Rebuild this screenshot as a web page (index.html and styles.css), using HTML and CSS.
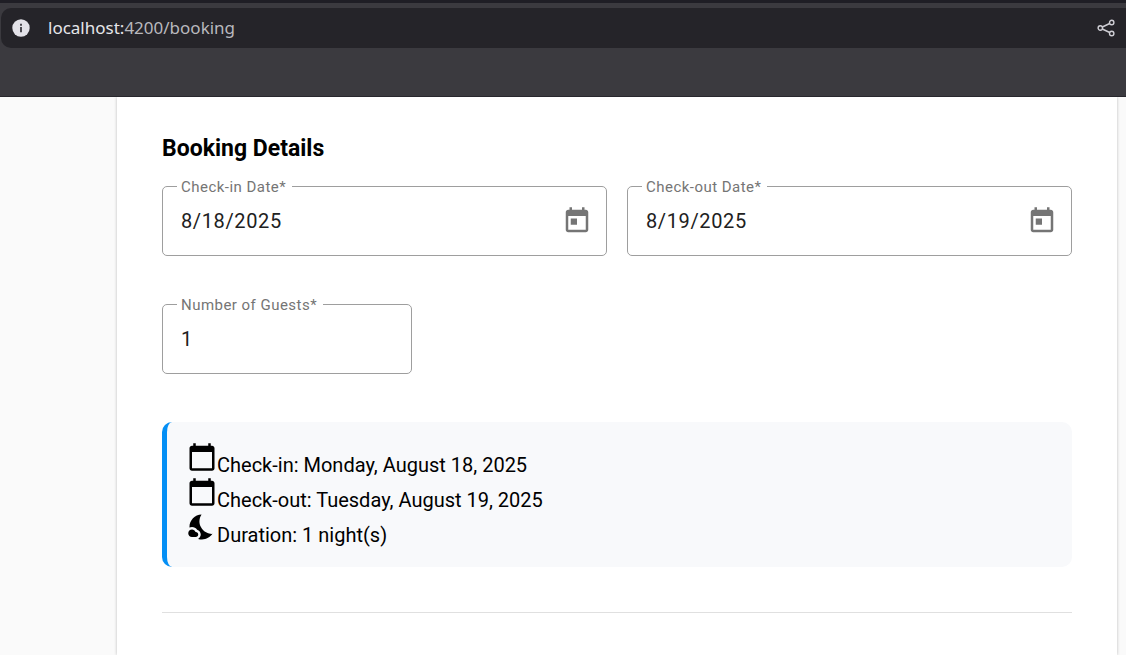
FILE: index.html
```html
<!DOCTYPE html>
<html lang="en">
<head>
<meta charset="utf-8">
<meta name="viewport" content="width=device-width, initial-scale=1">
<title>Booking</title>
<link rel="stylesheet" href="styles.css">
</head>
<body>
<header class="browser">
  <div class="address-bar">
    <button class="bar-button" type="button" aria-label="Site information">
      <svg width="18" height="18" viewBox="0 0 18 18"><circle cx="9" cy="9" r="8.7" fill="#e3e2e8"/><path d="M8 4.8h2v2H8zM8 8h2v5.2H8z" fill="#4a494f"/></svg>
    </button>
    <div class="address" role="textbox" aria-label="Address" contenteditable="true" spellcheck="false">localhost:<span class="address-path">4200/booking</span></div>
    <button class="bar-button" type="button" aria-label="Share">
      <svg width="18" height="18" viewBox="0 0 18 18" fill="none" stroke="#cfced4" stroke-width="1.4"><circle cx="3.3" cy="9" r="2.2"/><circle cx="14.7" cy="3.5" r="2.2"/><circle cx="14.7" cy="14.5" r="2.2"/><path d="M5.3 8l7.4-3.5M5.3 10l7.4 3.5"/></svg>
    </button>
  </div>
</header>
<main class="page">
  <form class="card">
    <h2 class="title">Booking Details</h2>
    <div class="dates">
      <div class="field">
        <label class="field-label" for="checkin">Check-in Date*</label>
        <input class="field-input" id="checkin" type="text" value="8/18/2025">
        <button class="picker" type="button" aria-label="Open check-in calendar">
          <svg width="30" height="30" viewBox="0 0 24 24"><path fill="currentColor" d="M19 3h-1V1h-2v2H8V1H6v2H5c-1.11 0-1.99.9-1.99 2L3 19c0 1.1.89 2 2 2h14c1.1 0 2-.9 2-2V5c0-1.1-.9-2-2-2zm0 16H5V8h14v11zM7 10h5v5H7z"/></svg>
        </button>
      </div>
      <div class="field">
        <label class="field-label" for="checkout">Check-out Date*</label>
        <input class="field-input" id="checkout" type="text" value="8/19/2025">
        <button class="picker" type="button" aria-label="Open check-out calendar">
          <svg width="30" height="30" viewBox="0 0 24 24"><path fill="currentColor" d="M19 3h-1V1h-2v2H8V1H6v2H5c-1.11 0-1.99.9-1.99 2L3 19c0 1.1.89 2 2 2h14c1.1 0 2-.9 2-2V5c0-1.1-.9-2-2-2zm0 16H5V8h14v11zM7 10h5v5H7z"/></svg>
        </button>
      </div>
    </div>
    <div class="field field-guests">
      <label class="field-label" for="guests">Number of Guests*</label>
      <input class="field-input" id="guests" type="number" min="1" value="1">
    </div>
    <section class="summary">
      <p class="summary-row"><svg width="30" height="30" viewBox="0 0 24 24"><path d="M20 3h-1V1h-2v2H7V1H5v2H4c-1.1 0-2 .9-2 2v16c0 1.1.9 2 2 2h16c1.1 0 2-.9 2-2V5c0-1.1-.9-2-2-2zm0 18H4V8h16v13z"/></svg>Check-in: Monday, August 18, 2025</p>
      <p class="summary-row"><svg width="30" height="30" viewBox="0 0 24 24"><path d="M20 3h-1V1h-2v2H7V1H5v2H4c-1.1 0-2 .9-2 2v16c0 1.1.9 2 2 2h16c1.1 0 2-.9 2-2V5c0-1.1-.9-2-2-2zm0 18H4V8h16v13z"/></svg>Check-out: Tuesday, August 19, 2025</p>
      <p class="summary-row"><svg width="30" height="30" viewBox="0 0 24 24"><path d="M11.1 12.08c-2.33-4.51-.5-8.48.53-10.07C6.27 2.2 1.98 6.59 1.98 12c0 .14.02.28.02.42.62-.27 1.29-.42 2-.42 1.66 0 3.18.83 4.1 2.15 1.67.48 2.9 2.02 2.9 3.85 0 1.52-.87 2.83-2.12 3.51.98.32 2.03.5 3.11.5 3.5 0 6.58-1.8 8.37-4.52-2.36.23-6.98-.97-9.26-5.41z"/><path d="M7 16h-.18C6.4 14.84 5.3 14 4 14c-1.66 0-3 1.34-3 3s1.34 3 3 3h3c1.1 0 2-.9 2-2s-.9-2-2-2z"/></svg>Duration: 1 night(s)</p>
    </section>
    <hr class="divider">
  </form>
</main>
</body>
</html>
```
FILE: styles.css
```css
* {
  box-sizing: border-box;
}

body {
  margin: 0;
  min-height: 100vh;
  display: flex;
  flex-direction: column;
  background: #fafafa;
  color: #000;
  font-family: Roboto, sans-serif;
  font-size: 20px;
}

button {
  padding: 0;
  border: 0;
  background: none;
  cursor: pointer;
}

svg {
  fill: currentColor;
}

.browser {
  padding: 5px 0 48px 1px;
  border-top: 3px solid #1f1e25;
  border-bottom: 1px solid #28272d;
  background: #3b3a3f;
}

.address-bar {
  display: flex;
  align-items: center;
  gap: 18px;
  height: 40px;
  padding: 0 11px;
  border-radius: 10px 0 0 10px;
  background: #252429;
}

.bar-button {
  display: flex;
}

.bar-button svg {
  fill: none;
}

.address {
  flex: 1;
  outline: 0;
  color: #e6e6ea;
  font-family: "Noto Sans", sans-serif;
  font-size: 17px;
  line-height: 24px;
}

.address-path {
  color: #b9b9be;
}

.page {
  flex: 1;
  display: flex;
  padding: 0 9px 0 117px;
}

.card {
  flex: 1;
  padding: 37px 45px 42px;
  background: #fff;
  box-shadow: 0 0 3px rgba(0, 0, 0, 0.25);
  clip-path: inset(0 -9px);
}

.title {
  margin: 0 0 22px;
  font-size: 23px;
  font-weight: 700;
  line-height: 30px;
}

.dates {
  display: grid;
  grid-template-columns: 1fr 1fr;
  gap: 20px;
}

.field {
  position: relative;
  display: flex;
  align-items: center;
  height: 70px;
  padding: 0 14px 0 18px;
  border: 1px solid #9e9e9e;
  border-radius: 5px;
}

.field-guests {
  width: 250px;
  margin-top: 48px;
}

.field-label {
  position: absolute;
  top: -10px;
  left: 14px;
  padding: 0 6px 0 4px;
  background: #fff;
  color: #757575;
  font-size: 15px;
  letter-spacing: 0.03125em;
  line-height: 20px;
}

.field-input {
  flex: 1;
  min-width: 0;
  padding: 0;
  border: 0;
  outline: 0;
  background: none;
  color: #212121;
  font: inherit;
  letter-spacing: 0.03125em;
  line-height: 30px;
  appearance: textfield;
}

.field-input::-webkit-inner-spin-button {
  display: none;
}

.picker {
  display: flex;
  color: #757575;
}

.summary {
  margin-top: 48px;
  padding: 20px;
  border-left: 5px solid #048ff5;
  border-radius: 10px;
  background: #f8f9fb;
}

.summary-row {
  margin: 0;
  line-height: 24px;
}

.divider {
  margin: 45px 0 0;
  border: 0;
  border-top: 1px solid #e0e0e0;
}
```
